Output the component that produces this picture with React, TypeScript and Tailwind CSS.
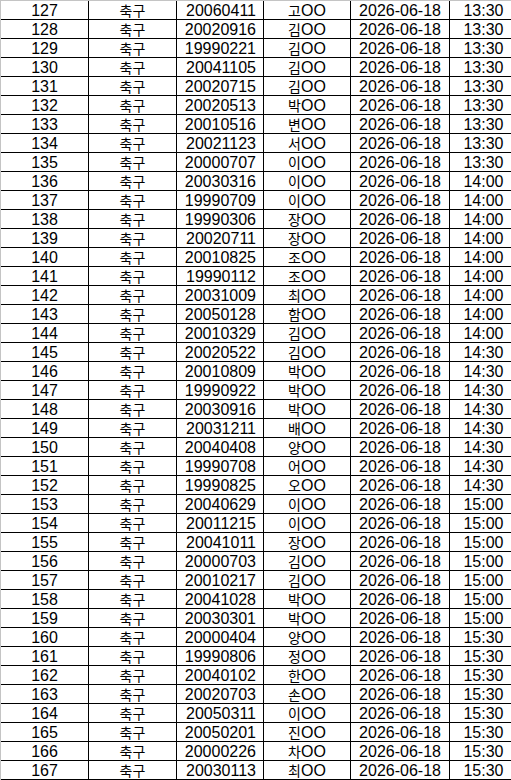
import React from "react";

const rows: [number, string, string, string][] = [
  [127, "20060411", "고", "13:30"],
  [128, "20020916", "김", "13:30"],
  [129, "19990221", "김", "13:30"],
  [130, "20041105", "김", "13:30"],
  [131, "20020715", "김", "13:30"],
  [132, "20020513", "박", "13:30"],
  [133, "20010516", "변", "13:30"],
  [134, "20021123", "서", "13:30"],
  [135, "20000707", "이", "13:30"],
  [136, "20030316", "이", "14:00"],
  [137, "19990709", "이", "14:00"],
  [138, "19990306", "장", "14:00"],
  [139, "20020711", "장", "14:00"],
  [140, "20010825", "조", "14:00"],
  [141, "19990112", "조", "14:00"],
  [142, "20031009", "최", "14:00"],
  [143, "20050128", "함", "14:00"],
  [144, "20010329", "김", "14:00"],
  [145, "20020522", "김", "14:30"],
  [146, "20010809", "박", "14:30"],
  [147, "19990922", "박", "14:30"],
  [148, "20030916", "박", "14:30"],
  [149, "20031211", "배", "14:30"],
  [150, "20040408", "양", "14:30"],
  [151, "19990708", "어", "14:30"],
  [152, "19990825", "오", "14:30"],
  [153, "20040629", "이", "15:00"],
  [154, "20011215", "이", "15:00"],
  [155, "20041011", "장", "15:00"],
  [156, "20000703", "김", "15:00"],
  [157, "20010217", "김", "15:00"],
  [158, "20041028", "박", "15:00"],
  [159, "20030301", "박", "15:00"],
  [160, "20000404", "양", "15:30"],
  [161, "19990806", "정", "15:30"],
  [162, "20040102", "한", "15:30"],
  [163, "20020703", "손", "15:30"],
  [164, "20050311", "이", "15:30"],
  [165, "20050201", "진", "15:30"],
  [166, "20000226", "차", "15:30"],
  [167, "20030113", "최", "15:30"],
];

const cell = "h-[19px] border-b border-black leading-[20px] overflow-hidden whitespace-nowrap";

export default function App() {
  return (
    <div
      className="w-[511px] h-[780px] bg-white text-black overflow-hidden text-[16px]"
      style={{ fontFamily: '"Liberation Sans", "Noto Sans CJK KR", sans-serif' }}
    >
      <div className="border-t border-l border-[#c4c4c4]">
        {rows.map(([n, birth, name, time]) => (
          <div key={n} className="grid grid-cols-[88px_88px_87px_87px_99px_1fr]">
            <div className={`${cell} border-r text-center`}>{n}</div>
            <div className={`${cell} border-r text-center`}>
              <span className="text-[14px]">축구</span>
            </div>
            <div className={`${cell} border-r text-right pr-[7px]`}>{birth}</div>
            <div className={`${cell} border-r text-center`}>
              <span className="text-[14px]">{name}</span>OO
            </div>
            <div className={`${cell} border-r text-center`}>2026-06-18</div>
            <div className={`${cell} text-center pl-[6px]`}>{time}</div>
          </div>
        ))}
      </div>
    </div>
  );
}
